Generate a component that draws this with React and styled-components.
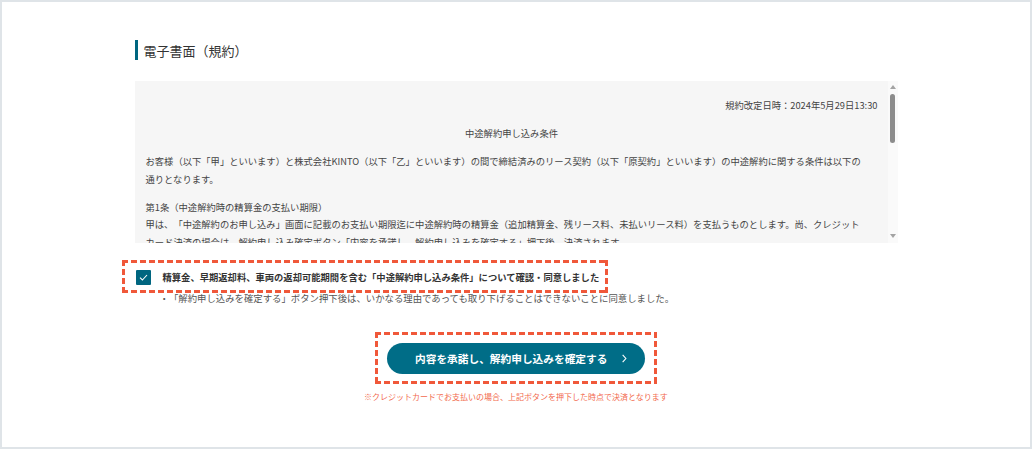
import styled, { createGlobalStyle } from 'styled-components';

const GlobalStyle = createGlobalStyle`
  * { box-sizing: border-box; }
  body {
    margin: 0;
    background: #fff;
    font-family: "Noto Sans CJK JP", "Noto Sans", sans-serif;
    color: #333;
    text-spacing-trim: space-all;
  }
`;

const Frame = styled.div`
  width: 1032px;
  height: 449px;
  border: 2px solid #dfe4e8;
  background: #fff;
  padding-top: 38px;
`;

const Column = styled.div`
  width: 763px;
  margin: 0 auto;
  display: flex;
  flex-direction: column;
`;

const Heading = styled.h2`
  margin: 0;
  height: 20px;
  display: flex;
  align-items: center;
  border-left: 3px solid #006680;
  padding-left: 6px;
  font-size: 13px;
  font-weight: 400;
  color: #333;
`;

const ScrollBox = styled.div`
  margin-top: 21px;
  height: 162px;
  display: flex;
  background: #f6f6f6;
`;

const TermsBody = styled.div`
  flex: 1;
  overflow: hidden;
  padding: 16px 10px 0 11px;
  font-size: 9.3px;
  line-height: 17.5px;
  color: #444;
  white-space: nowrap;
`;

const Block = styled.p`
  margin: 0 0 10.5px;
  text-align: ${(p) => p.$align || 'left'};
`;

const Track = styled.div`
  width: 10px;
  background: #fafafa;
  display: flex;
  flex-direction: column;
  align-items: center;
  padding: 4px 0 5px;
`;

const Arrow = styled.span`
  width: 0;
  height: 0;
  border-left: 3px solid transparent;
  border-right: 3px solid transparent;
  ${(p) =>
    p.$down
      ? 'border-top: 4px solid #a3a3a3; margin-top: auto;'
      : 'border-bottom: 4px solid #a3a3a3;'}
`;

const Thumb = styled.span`
  margin-top: 5px;
  width: 5px;
  height: 49px;
  border-radius: 3px;
  background: #8c8c8c;
`;

const Highlight = styled.div`
  position: relative;
  &::after {
    content: '';
    position: absolute;
    top: ${(p) => p.$t}px;
    bottom: ${(p) => p.$b}px;
    left: ${(p) => p.$l}px;
    right: ${(p) => p.$r}px;
    pointer-events: none;
    --c: #f0583a;
    background:
      linear-gradient(90deg, var(--c) 67%, transparent 0) top left / 9px 3px repeat-x,
      linear-gradient(90deg, var(--c) 67%, transparent 0) bottom left / 9px 3px repeat-x,
      linear-gradient(180deg, var(--c) 67%, transparent 0) top left / 3px 9px repeat-y,
      linear-gradient(180deg, var(--c) 67%, transparent 0) top right / 3px 9px repeat-y;
  }
`;

const AgreeArea = styled.div`
  margin-top: 26px;
  display: flex;
  flex-direction: column;
`;

const CheckRow = styled.label`
  align-self: flex-start;
  display: flex;
  align-items: center;
  gap: 12px;
  height: 16px;
  padding-left: 1px;
`;

const Box = styled.span`
  width: 15px;
  height: 15px;
  border-radius: 1px;
  background: #006680;
  display: flex;
  align-items: center;
  justify-content: center;
`;

const CheckLabel = styled.span`
  font-size: 9.3px;
  font-weight: 700;
  color: #333;
  white-space: nowrap;
`;

const Bullet = styled.p`
  margin: 5px 0 0;
  padding-left: 25px;
  font-size: 9.4px;
  line-height: 16px;
  color: #555;
  white-space: nowrap;
`;

const ActionArea = styled.div`
  margin-top: 37px;
  display: flex;
  flex-direction: column;
  align-items: center;
`;

const Confirm = styled.button`
  width: 258px;
  height: 31px;
  border: none;
  border-radius: 16px;
  background: #006d87;
  color: #fff;
  font-family: inherit;
  font-size: 10.7px;
  font-weight: 700;
  white-space: nowrap;
  display: flex;
  align-items: center;
  justify-content: flex-start;
  gap: 15px;
  padding: 0 18px 0 28px;
  cursor: pointer;
`;

const Note = styled.p`
  margin: 17px 0 0;
  font-size: 8px;
  line-height: 12px;
  color: #f26a4e;
  white-space: nowrap;
`;

function Check() {
  return (
    <svg width="9" height="7" viewBox="0 0 9 7" fill="none">
      <polyline points="1,3.6 3.4,6 8,1" stroke="#fff" strokeWidth="1.1" />
    </svg>
  );
}

function Chevron() {
  return (
    <svg width="5" height="9" viewBox="0 0 5 9" fill="none">
      <polyline points="0.7,0.7 4.2,4.5 0.7,8.3" stroke="#fff" strokeWidth="1.2" />
    </svg>
  );
}

export default function App() {
  return (
    <>
      <GlobalStyle />
      <Frame>
        <Column>
          <Heading>電子書面（規約）</Heading>
          <ScrollBox>
            <TermsBody>
              <Block $align="right">規約改定日時：2024年5月29日13:30</Block>
              <Block $align="center">中途解約申し込み条件</Block>
              <Block>
                お客様（以下「甲」といいます）と株式会社KINTO（以下「乙」といいます）の間で締結済みのリース契約（以下「原契約」といいます）の中途解約に関する条件は以下の
                <br />
                通りとなります。
              </Block>
              <Block>
                第1条（中途解約時の精算金の支払い期限）
                <br />
                甲は、「中途解約のお申し込み」画面に記載のお支払い期限迄に中途解約時の精算金（追加精算金、残リース料、未払いリース料）を支払うものとします。尚、クレジット
                <br />
                カード決済の場合は、解約申し込み確定ボタン「内容を承諾し、解約申し込みを確定する」押下後、決済されます。
              </Block>
            </TermsBody>
            <Track>
              <Arrow />
              <Thumb />
              <Arrow $down />
            </Track>
          </ScrollBox>

          <AgreeArea>
            <Highlight $t={-9} $b={-8} $l={-13} $r={-9} style={{ alignSelf: 'flex-start' }}>
              <CheckRow>
                <Box>
                  <Check />
                </Box>
                <CheckLabel>
                  精算金、早期返却料、車両の返却可能期間を含む「中途解約申し込み条件」について確認・同意しました
                </CheckLabel>
              </CheckRow>
            </Highlight>
            <Bullet>
              ・「解約申し込みを確定する」ボタン押下後は、いかなる理由であっても取り下げることはできないことに同意しました。
            </Bullet>
          </AgreeArea>

          <ActionArea>
            <Highlight $t={-11} $b={-10} $l={-12} $r={-12}>
              <Confirm type="button">
                <span>内容を承諾し、解約申し込みを確定する</span>
                <Chevron />
              </Confirm>
            </Highlight>
            <Note>※クレジットカードでお支払いの場合、上記ボタンを押下した時点で決済となります</Note>
          </ActionArea>
        </Column>
      </Frame>
    </>
  );
}
